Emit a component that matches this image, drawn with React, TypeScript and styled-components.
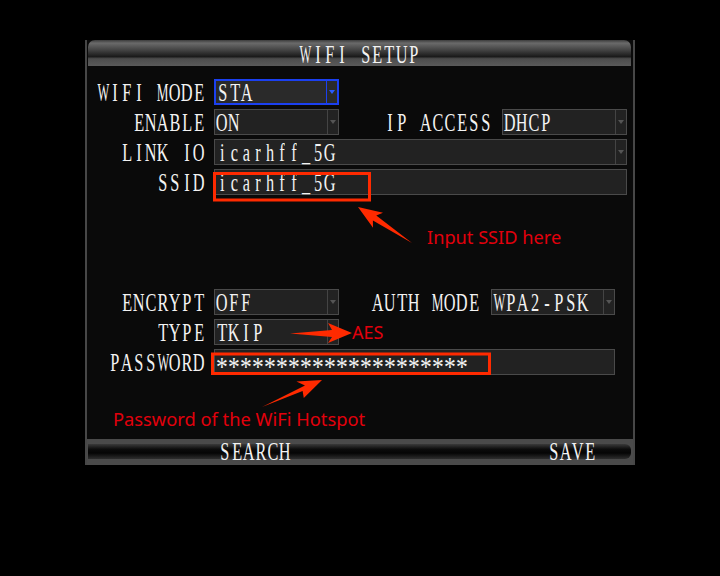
import styled, { createGlobalStyle } from 'styled-components'

const GlobalStyle = createGlobalStyle`
  html, body {
    margin: 0;
    background: #000;
  }
`

const Screen = styled.div`
  position: relative;
  width: 720px;
  height: 576px;
  box-sizing: border-box;
  padding: 40px 0 0 85px;
  background: #000;
  overflow: hidden;
  font-family: 'Liberation Serif', 'Times New Roman', serif;
  font-size: 24px;
  color: #f3f3f3;
`

const Panel = styled.div`
  width: 550px;
  height: 425px;
  box-sizing: border-box;
  border-left: 2px solid #474747;
  border-right: 2px solid #474747;
  background: #0a0a0a;
  display: flex;
  flex-direction: column;
`

const TitleBar = styled.div`
  height: 26px;
  margin: 0 2px 0 1px;
  border-radius: 7px 7px 0 0;
  background: linear-gradient(
    #3c3c3c 0%,
    #6a6a6a 12%,
    #444 38%,
    #1a1a1a 64%,
    #4c4c4c 72%,
    #5a5a5a 100%
  );
  display: flex;
  justify-content: center;
  line-height: 30px;
`

const Form = styled.div`
  flex: 1;
  padding-top: 13px;
  display: flex;
  flex-direction: column;
  gap: 4px;
`

const Row = styled.div`
  display: flex;
  height: 26px;
  line-height: 28px;
`

const Spacer = styled.div`
  height: 86px;
`

const Label = styled.div<{ $w: number; $pad?: number }>`
  width: ${(p) => p.$w}px;
  padding-right: ${(p) => p.$pad ?? 9}px;
  box-sizing: border-box;
  display: flex;
  justify-content: flex-end;
  flex: none;
`

const Field = styled.div<{ $w: number; $active?: boolean }>`
  width: ${(p) => p.$w}px;
  height: 26px;
  box-sizing: border-box;
  border: ${(p) => (p.$active ? '2px solid #1b40f0' : '1px solid #4a4a4a')};
  background: ${(p) => (p.$active ? '#2a2a2a' : '#222')};
  display: flex;
  flex: none;
  line-height: ${(p) => (p.$active ? 24 : 26)}px;
`

const FieldText = styled.div`
  flex: 1;
  display: flex;
  padding-left: 1px;
`

const DropArrow = styled.div<{ $active?: boolean }>`
  width: 10px;
  flex: none;
  border-left: 1px solid ${(p) => (p.$active ? '#1b40f0' : '#444')};
  display: flex;
  align-items: center;
  justify-content: center;
  &::after {
    content: '';
    border-left: 3px solid transparent;
    border-right: 3px solid transparent;
    border-top: 4px solid ${(p) => (p.$active ? '#2a5cff' : '#555')};
  }
`

const BottomBar = styled.div`
  height: 26px;
  background: #4a4a4a;
  padding-top: 5px;
  box-sizing: border-box;
`

const Track = styled.div`
  height: 15px;
  margin: 0 2px 0 1px;
  border-radius: 0 6px 6px 0;
  background: linear-gradient(#3a3a3a, #0c0c0c 35%, #050505 60%, #2e2e2e);
  display: flex;
  justify-content: space-between;
  padding: 0 35px 0 131px;
  line-height: 16px;
`

const BarText = styled.div`
  display: flex;
`

const Cell = styled.span`
  display: flex;
  justify-content: center;
  width: 12px;
  flex: none;
`

// the panel font is a 12px-wide bitmap face; squeeze the serif into each cell
const Glyph = styled.span<{ $sx: number; $star?: boolean }>`
  display: inline-block;
  transform: ${(p) => (p.$star ? 'scale(0.98, 1.1) translateY(4px)' : `scale(${p.$sx}, 1.03)`)};
`

const Overlay = styled.svg`
  position: absolute;
  left: 0;
  top: 0;
  pointer-events: none;
`

const Note = styled.div<{ $x: number; $y: number; $size?: number }>`
  position: absolute;
  left: ${(p) => p.$x}px;
  top: ${(p) => p.$y}px;
  font-family: 'Noto Sans', 'Open Sans', sans-serif;
  font-size: ${(p) => p.$size ?? 18}px;
  line-height: ${(p) => p.$size ?? 18}px;
  color: #e2000c;
  white-space: nowrap;
`

const squeeze = (c: string) => (c === 'W' ? 0.52 : c === 'M' ? 0.55 : 0.68)

const Mono = ({ text, star }: { text: string; star?: boolean }) => (
  <>
    {[...text].map((c, i) => (
      <Cell key={i}>
        <Glyph $sx={squeeze(c)} $star={star}>
          {c === ' ' ? '\u00a0' : c}
        </Glyph>
      </Cell>
    ))}
  </>
)

const Select = ({ w, value, active }: { w: number; value: string; active?: boolean }) => (
  <Field $w={w} $active={active}>
    <FieldText>
      <Mono text={value} />
    </FieldText>
    <DropArrow $active={active} />
  </Field>
)

const Input = ({ w, value, star }: { w: number; value: string; star?: boolean }) => (
  <Field $w={w}>
    <FieldText>
      <Mono text={value} star={star} />
    </FieldText>
  </Field>
)

const RED = '#ff2a00'

const App = () => {
  return (
    <Screen>
      <GlobalStyle />
      <Panel>
        <TitleBar>
          <Mono text="WIFI SETUP" />
        </TitleBar>
        <Form>
          <Row>
            <Label $w={127}>
              <Mono text="WIFI MODE" />
            </Label>
            <Select w={125} value="STA" active />
          </Row>
          <Row>
            <Label $w={127}>
              <Mono text="ENABLE" />
            </Label>
            <Select w={125} value="ON" />
            <Label $w={163} $pad={10}>
              <Mono text="IP ACCESS" />
            </Label>
            <Select w={125} value="DHCP" />
          </Row>
          <Row>
            <Label $w={127}>
              <Mono text="LINK IO" />
            </Label>
            <Select w={413} value="icarhff_5G" />
          </Row>
          <Row>
            <Label $w={127}>
              <Mono text="SSID" />
            </Label>
            <Input w={413} value="icarhff_5G" />
          </Row>
          <Spacer />
          <Row>
            <Label $w={127}>
              <Mono text="ENCRYPT" />
            </Label>
            <Select w={125} value="OFF" />
            <Label $w={152} $pad={11}>
              <Mono text="AUTH MODE" />
            </Label>
            <Select w={124} value="WPA2-PSK" />
          </Row>
          <Row>
            <Label $w={127}>
              <Mono text="TYPE" />
            </Label>
            <Select w={125} value="TKIP" />
          </Row>
          <Row>
            <Label $w={127}>
              <Mono text="PASSWORD" />
            </Label>
            <Input w={401} value={'*'.repeat(21)} star />
          </Row>
        </Form>
        <BottomBar>
          <Track>
            <BarText>
              <Mono text="SEARCH" />
            </BarText>
            <BarText>
              <Mono text="SAVE" />
            </BarText>
          </Track>
        </BottomBar>
      </Panel>

      <Overlay width={720} height={576} viewBox="0 0 720 576">
        <rect x={214.5} y={173.5} width={155} height={26.5} fill="none" stroke={RED} strokeWidth={3} />
        <rect x={212.5} y={354} width={277} height={19.5} fill="none" stroke={RED} strokeWidth={3} />
        <polygon
          fill={RED}
          points="358,207 383,212.8 376.3,215.6 412,243 372.9,220.6 373,227.8"
        />
        <polygon fill={RED} points="352,333 328,323 332,330 290,333.5 332,337 328,343" />
        <polygon
          fill={RED}
          points="322,380 303.8,398 302.6,390.9 262,407 305,385.5 296.4,381.6"
        />
      </Overlay>
      <Note $x={427} $y={228} $size={18.2}>
        Input SSID here
      </Note>
      <Note $x={352} $y={323}>
        AES
      </Note>
      <Note $x={113} $y={410} $size={18.3}>
        Password of the WiFi Hotspot
      </Note>
    </Screen>
  )
}

export default App
